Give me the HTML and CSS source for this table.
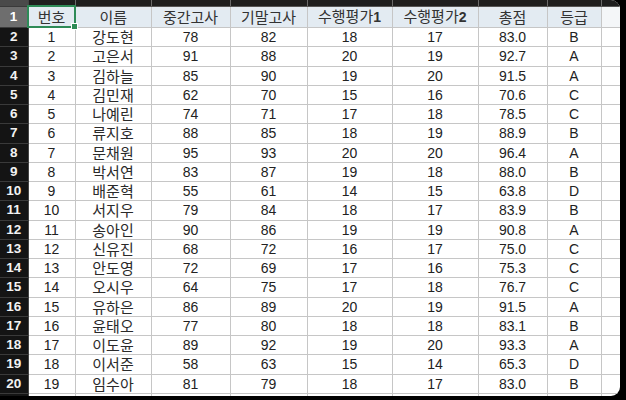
FILE: index.html
```html
<!DOCTYPE html>
<html lang="ko">
<head>
<meta charset="utf-8">
<link rel="stylesheet" href="styles.css">
</head>
<body>
<div class="frame">
<table class="sheet">
<colgroup>
<col class="c-rn"><col class="c-a"><col class="c-b"><col class="c-c"><col class="c-d"><col class="c-e"><col class="c-f"><col class="c-g"><col class="c-h"><col class="c-i">
</colgroup>
<tr class="colhdr"><td class="rn"></td><td></td><td></td><td></td><td></td><td></td><td></td><td></td><td></td><td></td></tr>
<tr class="head"><td class="rn sel">1</td><td class="active">번호<span class="handle"></span></td><td>이름</td><td>중간고사</td><td>기말고사</td><td>수행평가<b class="num">1</b></td><td>수행평가<b class="num">2</b></td><td>총점</td><td>등급</td><td class="blank"></td></tr>
<tr><td class="rn">2</td><td>1</td><td class="ko">강도현</td><td>78</td><td>82</td><td>18</td><td>17</td><td>83.0</td><td>B</td><td class="blank"></td></tr>
<tr><td class="rn">3</td><td>2</td><td class="ko">고은서</td><td>91</td><td>88</td><td>20</td><td>19</td><td>92.7</td><td>A</td><td class="blank"></td></tr>
<tr><td class="rn">4</td><td>3</td><td class="ko">김하늘</td><td>85</td><td>90</td><td>19</td><td>20</td><td>91.5</td><td>A</td><td class="blank"></td></tr>
<tr><td class="rn">5</td><td>4</td><td class="ko">김민재</td><td>62</td><td>70</td><td>15</td><td>16</td><td>70.6</td><td>C</td><td class="blank"></td></tr>
<tr><td class="rn">6</td><td>5</td><td class="ko">나예린</td><td>74</td><td>71</td><td>17</td><td>18</td><td>78.5</td><td>C</td><td class="blank"></td></tr>
<tr><td class="rn">7</td><td>6</td><td class="ko">류지호</td><td>88</td><td>85</td><td>18</td><td>19</td><td>88.9</td><td>B</td><td class="blank"></td></tr>
<tr><td class="rn">8</td><td>7</td><td class="ko">문채원</td><td>95</td><td>93</td><td>20</td><td>20</td><td>96.4</td><td>A</td><td class="blank"></td></tr>
<tr><td class="rn">9</td><td>8</td><td class="ko">박서연</td><td>83</td><td>87</td><td>19</td><td>18</td><td>88.0</td><td>B</td><td class="blank"></td></tr>
<tr><td class="rn">10</td><td>9</td><td class="ko">배준혁</td><td>55</td><td>61</td><td>14</td><td>15</td><td>63.8</td><td>D</td><td class="blank"></td></tr>
<tr><td class="rn">11</td><td>10</td><td class="ko">서지우</td><td>79</td><td>84</td><td>18</td><td>17</td><td>83.9</td><td>B</td><td class="blank"></td></tr>
<tr><td class="rn">12</td><td>11</td><td class="ko">송아인</td><td>90</td><td>86</td><td>19</td><td>19</td><td>90.8</td><td>A</td><td class="blank"></td></tr>
<tr><td class="rn">13</td><td>12</td><td class="ko">신유진</td><td>68</td><td>72</td><td>16</td><td>17</td><td>75.0</td><td>C</td><td class="blank"></td></tr>
<tr><td class="rn">14</td><td>13</td><td class="ko">안도영</td><td>72</td><td>69</td><td>17</td><td>16</td><td>75.3</td><td>C</td><td class="blank"></td></tr>
<tr><td class="rn">15</td><td>14</td><td class="ko">오시우</td><td>64</td><td>75</td><td>17</td><td>18</td><td>76.7</td><td>C</td><td class="blank"></td></tr>
<tr><td class="rn">16</td><td>15</td><td class="ko">유하은</td><td>86</td><td>89</td><td>20</td><td>19</td><td>91.5</td><td>A</td><td class="blank"></td></tr>
<tr><td class="rn">17</td><td>16</td><td class="ko">윤태오</td><td>77</td><td>80</td><td>18</td><td>18</td><td>83.1</td><td>B</td><td class="blank"></td></tr>
<tr><td class="rn">18</td><td>17</td><td class="ko">이도윤</td><td>89</td><td>92</td><td>19</td><td>20</td><td>93.3</td><td>A</td><td class="blank"></td></tr>
<tr><td class="rn">19</td><td>18</td><td class="ko">이서준</td><td>58</td><td>63</td><td>15</td><td>14</td><td>65.3</td><td>D</td><td class="blank"></td></tr>
<tr><td class="rn">20</td><td>19</td><td class="ko">임수아</td><td>81</td><td>79</td><td>18</td><td>17</td><td>83.0</td><td>B</td><td class="blank"></td></tr>
<tr><td class="rn"></td><td></td><td></td><td></td><td></td><td></td><td></td><td></td><td></td><td class="blank"></td></tr>
</table>
</div>
</body>
</html>
```
FILE: styles.css
```css
html, body {
  margin: 0;
  padding: 0;
  background: #000;
}
body {
  width: 626px;
  height: 400px;
  overflow: hidden;
}
.frame {
  width: 620px;
  height: 396px;
  overflow: hidden;
  background: #fff;
  border-radius: 0 9px 9px 0;
}
.sheet {
  border-collapse: collapse;
  table-layout: fixed;
  width: 620px;
  font-family: "Liberation Sans", "Noto Sans CJK KR", Arial, sans-serif;
  font-size: 14px;
  color: #222;
}
.c-rn { width: 28px; }
.c-a { width: 47px; }
.c-b { width: 76px; }
.c-c { width: 79px; }
.c-d { width: 77px; }
.c-e { width: 85px; }
.c-f { width: 86px; }
.c-g { width: 69px; }
.c-h { width: 54px; }
.c-i { width: 19px; }
.sheet td {
  height: 18.25px;
  padding: 0;
  border: 1px solid #c6c6c6;
  text-align: center;
  vertical-align: middle;
  line-height: 16px;
  white-space: nowrap;
}
.sheet td.ko {
  font-family: "Noto Sans CJK KR", "Liberation Sans", sans-serif;
  font-size: 15px;
  line-height: 16px;
  color: #2a2a2a;
}
.sheet .colhdr td {
  height: 5px;
  line-height: 5px;
  background: #1e1e1e;
  border: none;
  border-left: 1px solid #6a6a6a;
  border-bottom: 1px solid #555;
}
.sheet .colhdr td.rn { background: #4a4a4a; border-left: none; }
.sheet .head td {
  height: 19px;
  background: #e3ebf2;
  color: #333;
  font-family: "Noto Sans CJK KR", "Liberation Sans", sans-serif;
  font-size: 15px;
}
.sheet .head td.blank { background: #f4f6f8; }
.num {
  font-family: "Liberation Sans", Arial, sans-serif;
  font-weight: bold;
  font-size: 14px;
}
.sheet td.rn {
  background: #141414;
  color: #f2f2f2;
  font-family: "Liberation Sans", Arial, sans-serif;
  font-weight: bold;
  font-size: 13.5px;
  border: none;
  border-bottom: 1px solid #3a3a3a;
  border-right: 1px solid #444;
}
.sheet .head td.rn.sel {
  background: #6e6e6e;
  color: #fff;
}
.sheet td.active {
  position: relative;
  border: 2px solid #2e8b57;
}
.handle {
  position: absolute;
  right: -4px;
  bottom: -4px;
  width: 5px;
  height: 5px;
  background: #2e8b57;
  border: 1px solid #fff;
}
.sheet td.blank { border-right: none; }
```
